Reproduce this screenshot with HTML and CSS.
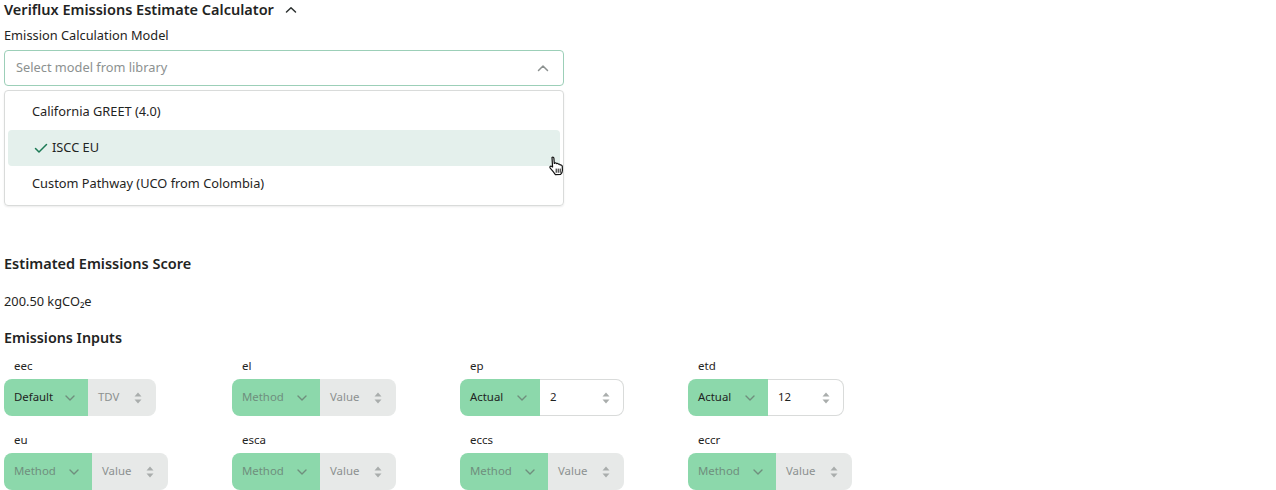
FILE: index.html
```html
<html>

<head>
  <title>Veriflux Emissions Estimate Calculator</title>
  <link rel="stylesheet" href="styles.css">
</head>

<body>

  <div class="title-row">
    <h2>Veriflux Emissions Estimate Calculator</h2>
    <svg class="title-chevron" width="12" height="8" viewBox="0 0 12 8"><path d="M1.5 6 L6 1.8 L10.5 6" /></svg>
  </div>

  <div class="model-field">
    <label class="model-label">Emission Calculation Model</label>
    <div class="select-box">
      <span>Select model from library</span>
      <svg width="12" height="8" viewBox="0 0 12 8"><path d="M1.5 6.5 L6 2 L10.5 6.5" /></svg>
    </div>
    <div class="select-menu">
      <div class="option"><span>California GREET (4.0)</span></div>
      <div class="option selected">
        <svg width="14" height="12" viewBox="0 0 14 12"><path d="M1.5 6.5 L5 10 L12.5 2.5" /></svg>
        <span>ISCC EU</span>
      </div>
      <div class="option"><span>Custom Pathway (UCO from Colombia)</span></div>
      <svg class="cursor" width="16" height="20" viewBox="0 0 16 20">
        <path d="M4 1.5 C4.8 0.8 5.8 1.2 5.9 2.2 L6.3 7.5 L7 7 C7.8 6.7 8.4 7 8.6 7.6 C9.4 7.2 10.2 7.5 10.4 8.2 C11.2 7.9 12 8.2 12.2 9 C13.2 8.8 14.2 9.4 14.3 10.4 L14.4 14.5 C14.4 16.4 13.4 17.6 12.6 18.4 L7.4 18.6 C6.4 17.2 4.4 14.6 2.2 12.2 C1.4 11.2 2.2 9.8 3.4 10.2 L4.6 11 Z" />
        <path class="cursor-lines" d="M8.2 13 V16.4 M10.2 13 V16.4 M12.2 13 V16.4" />
      </svg>
    </div>
  </div>

  <h3 class="score-title">Estimated Emissions Score</h3>
  <p class="score-value">200.50 kgCO₂e</p>

  <h3 class="inputs-title">Emissions Inputs</h3>

  <div class="inputs-grid">
    <div class="input-item">
      <div class="input-name">eec</div>
      <div class="input-pair">
        <div class="method w-84"><span>Default</span><svg width="10" height="6" viewBox="0 0 10 6"><path d="M1 1 L5 5 L9 1" /></svg></div>
        <div class="value off w-68"><span>TDV</span><svg class="spin" width="8" height="12" viewBox="0 0 8 12"><path d="M4 0.5 L7.5 4.5 H0.5 Z M4 11.5 L7.5 7.5 H0.5 Z" /></svg></div>
      </div>
    </div>
    <div class="input-item">
      <div class="input-name">el</div>
      <div class="input-pair">
        <div class="method empty w-88"><span>Method</span><svg width="10" height="6" viewBox="0 0 10 6"><path d="M1 1 L5 5 L9 1" /></svg></div>
        <div class="value off w-76"><span>Value</span><svg class="spin" width="8" height="12" viewBox="0 0 8 12"><path d="M4 0.5 L7.5 4.5 H0.5 Z M4 11.5 L7.5 7.5 H0.5 Z" /></svg></div>
      </div>
    </div>
    <div class="input-item">
      <div class="input-name">ep</div>
      <div class="input-pair">
        <div class="method w-80"><span>Actual</span><svg width="10" height="6" viewBox="0 0 10 6"><path d="M1 1 L5 5 L9 1" /></svg></div>
        <div class="value w-84"><span>2</span><svg class="spin" width="8" height="12" viewBox="0 0 8 12"><path d="M4 0.5 L7.5 4.5 H0.5 Z M4 11.5 L7.5 7.5 H0.5 Z" /></svg></div>
      </div>
    </div>
    <div class="input-item">
      <div class="input-name">etd</div>
      <div class="input-pair">
        <div class="method w-80"><span>Actual</span><svg width="10" height="6" viewBox="0 0 10 6"><path d="M1 1 L5 5 L9 1" /></svg></div>
        <div class="value w-76"><span>12</span><svg class="spin" width="8" height="12" viewBox="0 0 8 12"><path d="M4 0.5 L7.5 4.5 H0.5 Z M4 11.5 L7.5 7.5 H0.5 Z" /></svg></div>
      </div>
    </div>
    <div class="input-item">
      <div class="input-name">eu</div>
      <div class="input-pair">
        <div class="method empty w-88"><span>Method</span><svg width="10" height="6" viewBox="0 0 10 6"><path d="M1 1 L5 5 L9 1" /></svg></div>
        <div class="value off w-76"><span>Value</span><svg class="spin" width="8" height="12" viewBox="0 0 8 12"><path d="M4 0.5 L7.5 4.5 H0.5 Z M4 11.5 L7.5 7.5 H0.5 Z" /></svg></div>
      </div>
    </div>
    <div class="input-item">
      <div class="input-name">esca</div>
      <div class="input-pair">
        <div class="method empty w-88"><span>Method</span><svg width="10" height="6" viewBox="0 0 10 6"><path d="M1 1 L5 5 L9 1" /></svg></div>
        <div class="value off w-76"><span>Value</span><svg class="spin" width="8" height="12" viewBox="0 0 8 12"><path d="M4 0.5 L7.5 4.5 H0.5 Z M4 11.5 L7.5 7.5 H0.5 Z" /></svg></div>
      </div>
    </div>
    <div class="input-item">
      <div class="input-name">eccs</div>
      <div class="input-pair">
        <div class="method empty w-88"><span>Method</span><svg width="10" height="6" viewBox="0 0 10 6"><path d="M1 1 L5 5 L9 1" /></svg></div>
        <div class="value off w-76"><span>Value</span><svg class="spin" width="8" height="12" viewBox="0 0 8 12"><path d="M4 0.5 L7.5 4.5 H0.5 Z M4 11.5 L7.5 7.5 H0.5 Z" /></svg></div>
      </div>
    </div>
    <div class="input-item">
      <div class="input-name">eccr</div>
      <div class="input-pair">
        <div class="method empty w-88"><span>Method</span><svg width="10" height="6" viewBox="0 0 10 6"><path d="M1 1 L5 5 L9 1" /></svg></div>
        <div class="value off w-76"><span>Value</span><svg class="spin" width="8" height="12" viewBox="0 0 8 12"><path d="M4 0.5 L7.5 4.5 H0.5 Z M4 11.5 L7.5 7.5 H0.5 Z" /></svg></div>
      </div>
    </div>
  </div>

</body>

</html>
```

FILE: styles.css
```css
:root {
  --text: #1f2423;
  --muted: #8c9190;
  --green: #8cd8ab;
  --grey: #e7e9e8;
  --border: #d9dbda;
}

* {
  margin: 0;
  padding: 0;
  box-sizing: border-box;
}

html,
body {
  height: 490px;
  overflow: hidden;
}

body {
  background: #fff;
  color: var(--text);
  font-family: "Noto Sans", sans-serif;
  font-size: 12.8px;
  padding-left: 4px;
}

svg path {
  fill: none;
  stroke-linecap: round;
  stroke-linejoin: round;
}

.title-row {
  display: flex;
  align-items: center;
  gap: 11px;
  height: 20px;
}

.title-row h2 {
  font-size: 14.5px;
  font-weight: 600;
  line-height: 19px;
  padding-bottom: 1px;
}

.title-chevron path {
  stroke: #2c3130;
  stroke-width: 1.5;
}

.model-field {
  width: 560px;
  margin-top: 5px;
}

.model-label {
  display: block;
  line-height: 20px;
}

.select-box {
  display: flex;
  align-items: center;
  justify-content: space-between;
  height: 36px;
  margin-top: 5px;
  padding: 0 14px 0 11px;
  border: 1px solid #9ccfb8;
  border-radius: 4px;
  color: var(--muted);
}

.select-box span {
  margin-bottom: 2px;
}

.select-box path {
  stroke: #8c9190;
  stroke-width: 1.5;
}

.select-menu {
  position: relative;
  margin-top: 4px;
  height: 116px;
  padding: 3px;
  border: 1px solid var(--border);
  border-radius: 4px;
  box-shadow: 0 1px 2px rgba(0, 0, 0, 0.08);
}

.option {
  display: flex;
  align-items: center;
  height: 36px;
  padding-left: 24px;
  border-radius: 4px;
}

.option span {
  margin-bottom: 2px;
}

.option.selected {
  gap: 4px;
  padding-left: 26px;
  background: #e4f0ec;
}

.option.selected path {
  stroke: #1c7a55;
  stroke-width: 1.5;
}

.cursor {
  position: absolute;
  left: 543px;
  top: 65px;
}

.cursor path {
  fill: #fff;
  stroke: #111;
  stroke-width: 1.2;
}

.cursor .cursor-lines {
  fill: none;
  stroke-width: 1;
}

.score-title {
  margin-top: 47px;
  font-size: 14.5px;
  font-weight: 600;
  line-height: 20px;
}

.score-value {
  margin-top: 18px;
  line-height: 20px;
}

.inputs-title {
  margin-top: 17px;
  font-size: 14.3px;
  font-weight: 600;
  line-height: 20px;
}

.inputs-grid {
  display: grid;
  grid-template-columns: repeat(4, 228px);
  row-gap: 14px;
  margin-top: 8px;
}

.input-name {
  height: 23px;
  padding-left: 10px;
  font-size: 11.5px;
  line-height: 20px;
}

.input-pair {
  display: flex;
  height: 37px;
  font-size: 11.4px;
}

.input-pair span {
  margin-bottom: 2px;
}

.method,
.value {
  display: flex;
  align-items: center;
  justify-content: space-between;
}

.method {
  padding: 0 13px 0 10px;
  background: var(--green);
  border-radius: 8px 0 0 8px;
}

.method.empty span {
  color: #6f8f7d;
}

.method path {
  stroke: #6f8f7d;
  stroke-width: 1.4;
}

.value {
  padding: 0 13px 0 10px;
  border: 1px solid var(--border);
  border-left: none;
  border-radius: 0 8px 8px 0;
}

.value.off {
  background: var(--grey);
  border-color: var(--grey);
  color: var(--muted);
}

.spin path {
  fill: #a9adac;
  stroke: none;
}

.w-68 { width: 68px; }
.w-76 { width: 76px; }
.w-80 { width: 80px; }
.w-84 { width: 84px; }
.w-88 { width: 88px; }
```
